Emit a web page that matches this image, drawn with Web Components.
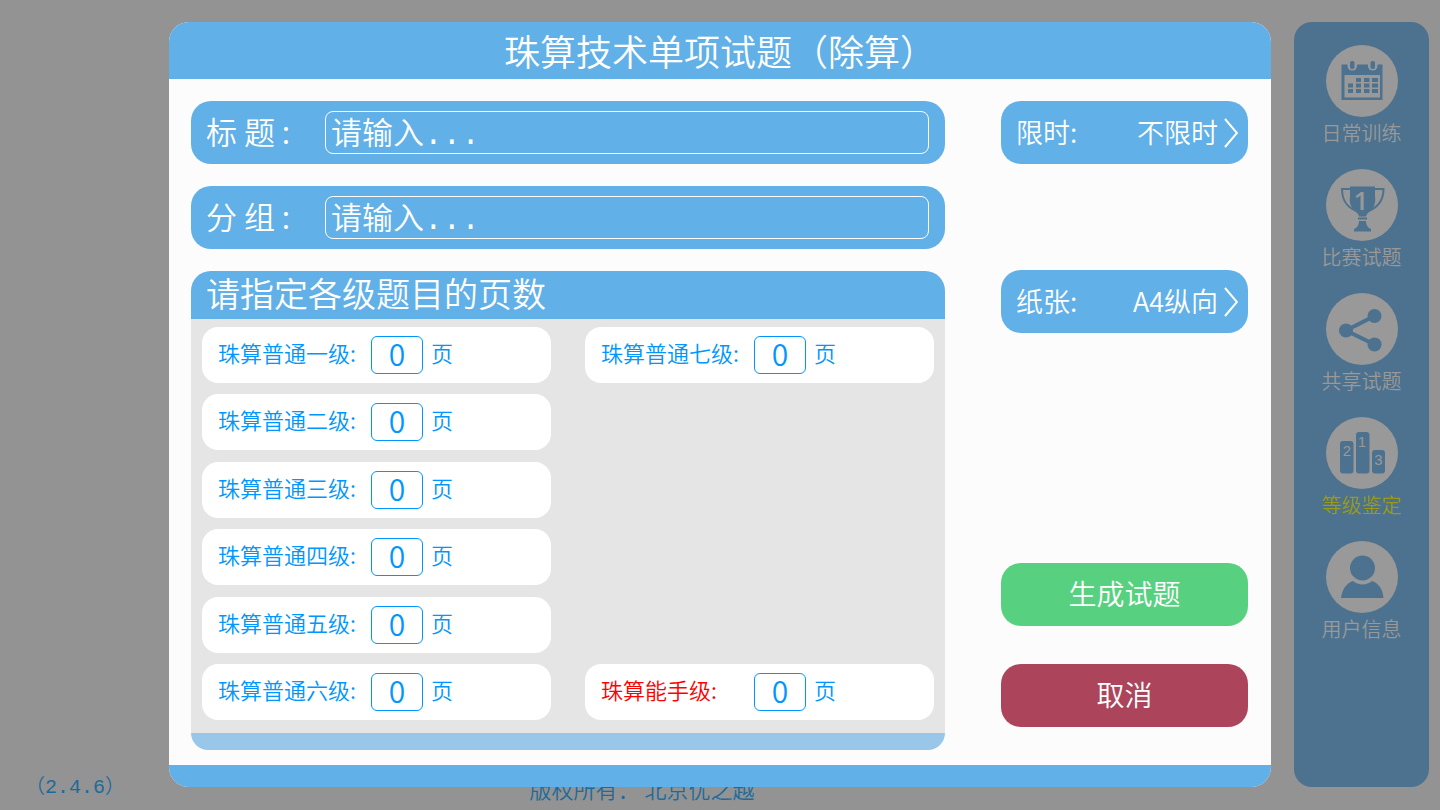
<!DOCTYPE html>
<html lang="zh-CN">
<head>
<meta charset="utf-8">
<meta name="viewport" content="width=device-width, initial-scale=1">
<title>珠算技术单项试题</title>
<style>
    body {
        margin: 0;
        background: #939393;
        font-family: "Noto Sans CJK SC", sans-serif;
        font-weight: 350;
        --blue: #61b0e8;
        --accent: #0096ff;
        --dim-blue: #4c728f;
        --dim-white: #999999;
        --mono: "Liberation Mono", "Noto Sans CJK SC", monospace;
    }
</style>
</head>
<body>
<app-shell>
    <side-nav slot="nav">
        <nav-item href="#daily" icon="calendar">日常训练</nav-item>
        <nav-item href="#match" icon="trophy">比赛试题</nav-item>
        <nav-item href="#share" icon="share">共享试题</nav-item>
        <nav-item href="#grade" icon="podium" active>等级鉴定</nav-item>
        <nav-item href="#user" icon="user">用户信息</nav-item>
    </side-nav>
    <page-footer slot="footer" version="（2.4.6）">版权所有： 北京优之越</page-footer>
    <exam-dialog slot="dialog">
        <span slot="title">珠算技术单项试题（除算）</span>
        <text-row label="标 题 :" name="title"></text-row>
        <text-row label="分 组 :" name="group"></text-row>
        <level-panel>
            <span slot="title">请指定各级题目的页数</span>
            <level-card>珠算普通一级:</level-card>
            <level-card>珠算普通二级:</level-card>
            <level-card>珠算普通三级:</level-card>
            <level-card>珠算普通四级:</level-card>
            <level-card>珠算普通五级:</level-card>
            <level-card>珠算普通六级:</level-card>
            <level-card>珠算普通七级:</level-card>
            <level-card class="last" highlight>珠算能手级:</level-card>
        </level-panel>
        <option-picker slot="side" label="限时:" options="不限时,5分钟,10分钟"></option-picker>
        <option-picker slot="side" label="纸张:" options="A4纵向,A4横向"></option-picker>
        <action-button slot="action">生成试题</action-button>
        <action-button slot="action" variant="cancel">取消</action-button>
    </exam-dialog>
</app-shell>

<script>
const ICONS = {
    calendar: `
        <path class="fg" d="M15.500 19.500h41v35.500h-41z"/>
        <path class="bg" d="M18.500 30h35.500v22.500h-35.500z"/>
        <path class="fg" d="M30 33h5v4h-5zM38 33h5.500v4h-5.500zM46 33h6v4h-6zM22 38.500h5v4h-5zM30 38.500h5v4h-5zM38 38.500h5.500v4h-5.500zM46 38.500h6v4h-6zM22 44h5v4h-5zM30 44h5v4h-5zM38 44h5.500v4h-5.500zM46 44h6v4h-6z"/>
        <rect class="bg" x="21.500" y="14" width="9.500" height="11.500" rx="4.500"/>
        <rect class="bg" x="42" y="14" width="9.500" height="11.500" rx="4.500"/>
        <rect class="fg" x="24" y="16" width="4.500" height="8" rx="2"/>
        <rect class="fg" x="44.500" y="16" width="4.500" height="8" rx="2"/>`,
    trophy: `
        <path class="line" d="M25 20H16C16 32 21 39 33 43M48 20h9.500C57.500 32 52 39 40 43"/>
        <path class="fg" d="M24 17.500H49V27C50 34 48 39 43 43C41 45 40 46 40 47.500H33C33 46 32 45 30 43C25 39 23 34 24 27z"/>
        <path class="fg" d="M32 48.500h9v2h-9zM33 52h7C40 56 42 59 45 60V62.500H28V60C31 59 33 56 33 52z"/>
        <text class="first" x="35" y="41" font-size="26">1</text>`,
    share: `
        <path class="line thick" d="M48.500 23L20 37.500L48.500 51.500"/>
        <circle class="fg" cx="20" cy="37.500" r="7"/>
        <circle class="fg" cx="48.500" cy="23" r="7"/>
        <circle class="fg" cx="48.500" cy="51.500" r="7"/>`,
    podium: `
        <rect class="fg" x="14" y="24" width="13.500" height="32.500" rx="3"/>
        <rect class="fg" x="30" y="15" width="13.500" height="41.500" rx="3"/>
        <rect class="fg" x="46" y="33" width="13" height="23.500" rx="3"/>
        <text x="21" y="39" font-size="15">2</text>
        <text x="36" y="30" font-size="15">1</text>
        <text x="52.500" y="48" font-size="15">3</text>`,
    user: `
        <circle class="fg" cx="36.500" cy="27" r="12.500"/>
        <path class="fg" d="M15 57C16 49 20 42 27 40C32 44.500 41 44.500 46 40C53 42 57 49 57.500 57z"/>`
};

// Small base class: subclasses return their markup from template()
class BaseElement extends HTMLElement {
    constructor() {
        super();
        this.attachShadow({ mode: 'open' });
    }

    connectedCallback() {
        this.shadowRoot.innerHTML = this.template();
    }
}

class AppShell extends BaseElement {
    template() {
        return `
            <style>
                :host {
                    display: grid;
                    grid-template-columns: 1fr 135px;
                    grid-template-rows: 1fr 40px;
                    column-gap: 10px;
                    min-height: 100vh;
                    padding-right: 11px;
                    box-sizing: border-box;
                    position: relative;
                }

                .nav {
                    grid-column: 2;
                    grid-row: 1 / 3;
                    padding: 22px 0 23px;
                    display: grid;
                }

                .footer {
                    grid-column: 1;
                    grid-row: 2;
                }

                /* modal layer above the page, the nav stays visible beside it */
                .overlay {
                    position: absolute;
                    inset: 22px 169px 23px 169px;
                    display: grid;
                }
            </style>
            <div class="nav"><slot name="nav"></slot></div>
            <div class="footer"><slot name="footer"></slot></div>
            <div class="overlay"><slot name="dialog"></slot></div>
        `;
    }
}

class SideNav extends BaseElement {
    template() {
        return `
            <style>
                :host {
                    display: block;
                    background: var(--dim-blue);
                    border-radius: 18px;
                    padding-top: 23px;
                }

                nav {
                    display: flex;
                    flex-direction: column;
                    gap: 20px;
                }
            </style>
            <nav><slot></slot></nav>
        `;
    }
}

class NavItem extends BaseElement {
    template() {
        return `
            <style>
                :host {
                    display: block;
                    color: var(--dim-white);
                }

                :host([active]) {
                    color: #999918;
                }

                a {
                    display: flex;
                    flex-direction: column;
                    align-items: center;
                    color: inherit;
                    text-decoration: none;
                    font-size: 20px;
                    line-height: 32px;
                }

                svg {
                    width: 72px;
                    height: 72px;
                }

                .bg, text {
                    fill: var(--dim-white);
                }

                .fg {
                    fill: var(--dim-blue);
                }

                .line {
                    fill: none;
                    stroke: var(--dim-blue);
                    stroke-width: 2;
                }

                .thick {
                    stroke-width: 4;
                }

                text {
                    font-family: "Liberation Sans", sans-serif;
                    text-anchor: middle;
                }

                .first {
                    font-family: "Open Sans", sans-serif;
                    font-weight: 600;
                }
            </style>
            <a href="${this.getAttribute('href')}">
                <svg viewBox="0 0 72 72" aria-hidden="true">
                    <circle class="bg" cx="36" cy="36" r="36"/>
                    ${ICONS[this.getAttribute('icon')]}
                </svg>
                <slot></slot>
            </a>
        `;
    }
}

class PageFooter extends BaseElement {
    template() {
        return `
            <style>
                :host {
                    display: grid;
                    grid-template-columns: 1fr auto 1fr;
                    color: #1e6b9b;
                    font-size: 22px;
                    line-height: 36px;
                }

                .version {
                    padding-left: 25px;
                    font-family: var(--mono);
                    font-size: 20px;
                }
            </style>
            <span class="version">${this.getAttribute('version')}</span>
            <span><slot></slot></span>
        `;
    }
}

class ExamDialog extends BaseElement {
    template() {
        return `
            <style>
                :host {
                    display: grid;
                    grid-template-rows: 57px 1fr 22px;
                    background: #fcfcfc;
                    border-radius: 20px;
                    overflow: hidden;
                }

                h1 {
                    margin: 0;
                    background: var(--blue);
                    color: #fff;
                    font-size: 36px;
                    font-weight: inherit;
                    line-height: 57px;
                    text-align: center;
                }

                .body {
                    display: grid;
                    grid-template-columns: 1fr 247px;
                    column-gap: 56px;
                    padding: 22px 23px 15px 22px;
                }

                .main {
                    display: grid;
                    grid-template-rows: auto auto 1fr;
                    row-gap: 22px;
                }

                .side {
                    display: flex;
                    flex-direction: column;
                    justify-content: space-between;
                    padding-bottom: 23px;
                }

                .options {
                    display: grid;
                    gap: 106px;
                }

                .actions {
                    display: grid;
                    gap: 38px;
                }

                .bar {
                    background: var(--blue);
                }
            </style>
            <h1><slot name="title"></slot></h1>
            <div class="body">
                <div class="main"><slot></slot></div>
                <div class="side">
                    <div class="options"><slot name="side"></slot></div>
                    <div class="actions"><slot name="action"></slot></div>
                </div>
            </div>
            <div class="bar"></div>
        `;
    }
}

class TextRow extends BaseElement {
    template() {
        const name = this.getAttribute('name');
        return `
            <style>
                :host {
                    display: grid;
                    grid-template-columns: 119px 1fr;
                    align-items: center;
                    height: 63px;
                    box-sizing: border-box;
                    padding: 0 16px 0 15px;
                    background: var(--blue);
                    border-radius: 20px;
                    color: #fff;
                    font-size: 31px;
                }

                label {
                    line-height: 40px;
                    padding-bottom: 4px;
                    white-space: pre;
                }

                input {
                    width: 100%;
                    height: 43px;
                    box-sizing: border-box;
                    padding: 5px 5px 0;
                    border: 1px solid #fff;
                    border-radius: 8px;
                    background: none;
                    color: inherit;
                    font: inherit;
                    font-family: var(--mono);
                }

                input::placeholder {
                    color: #fff;
                    opacity: 1;
                }
            </style>
            <label for="${name}">${this.getAttribute('label')}</label>
            <input id="${name}" name="${name}" type="text" placeholder="请输入...">
        `;
    }
}

class LevelPanel extends BaseElement {
    template() {
        return `
            <style>
                :host {
                    display: grid;
                    grid-template-rows: 48px 1fr 17px;
                    border-radius: 20px;
                    background: #e5e5e5;
                }

                h2 {
                    margin: 0;
                    padding: 0 15px 4px;
                    background: var(--blue);
                    border-radius: 20px 20px 0 0;
                    color: #fff;
                    font-size: 34px;
                    font-weight: inherit;
                    line-height: 44px;
                }

                .grid {
                    display: grid;
                    grid-template-columns: 1fr 1fr;
                    grid-template-rows: repeat(6, 56px);
                    grid-auto-flow: column;
                    align-content: space-between;
                    column-gap: 34px;
                    padding: 8px 11px 13px;
                }

                ::slotted(.last) {
                    grid-column: 2;
                    grid-row: 6;
                }

                .bar {
                    background: #98c7ea;
                    border-radius: 0 0 20px 20px;
                }
            </style>
            <h2><slot name="title"></slot></h2>
            <div class="grid"><slot></slot></div>
            <div class="bar"></div>
        `;
    }
}

class LevelCard extends BaseElement {
    template() {
        return `
            <style>
                :host {
                    display: grid;
                    grid-template-columns: 153px 52px auto;
                    align-items: center;
                    justify-content: start;
                    padding-left: 16px;
                    background: #fff;
                    border-radius: 16px;
                    color: var(--accent);
                    font-size: 22px;
                    line-height: 32px;
                }

                label, .unit {
                    padding-bottom: 6px;
                }

                :host([highlight]) label {
                    color: #ff0000;
                }

                input {
                    width: 52px;
                    height: 38px;
                    box-sizing: border-box;
                    padding: 0 0 4px;
                    border: 1px solid var(--accent);
                    border-radius: 6px;
                    background: none;
                    color: inherit;
                    font: inherit;
                    font-size: 30px;
                    text-align: center;
                }

                .unit {
                    padding-left: 8px;
                }
            </style>
            <label for="pages"><slot></slot></label>
            <input id="pages" type="text" inputmode="numeric" value="0">
            <span class="unit">页</span>
        `;
    }
}

class OptionPicker extends BaseElement {
    template() {
        const options = this.getAttribute('options').split(',');
        return `
            <style>
                :host {
                    display: grid;
                    grid-template-columns: auto 1fr 14px;
                    align-items: center;
                    column-gap: 6px;
                    height: 63px;
                    box-sizing: border-box;
                    padding: 0 10px 0 15px;
                    background: var(--blue);
                    border-radius: 20px;
                    color: #fff;
                    font-size: 27px;
                }

                label {
                    padding-bottom: 2px;
                }

                select {
                    appearance: none;
                    min-width: 0;
                    height: 43px;
                    padding: 0 0 2px;
                    border: none;
                    background: none;
                    color: inherit;
                    font: inherit;
                    text-align: right;
                    text-align-last: right;
                }

                option {
                    color: #333;
                }

                svg {
                    width: 14px;
                    height: 30px;
                    fill: none;
                    stroke: #fff;
                    stroke-width: 2;
                }
            </style>
            <label for="choice">${this.getAttribute('label')}</label>
            <select id="choice">
                ${options.map(text => `<option>${text}</option>`).join('')}
            </select>
            <svg viewBox="0 0 14 30" aria-hidden="true"><path d="M1 1L13 15L1 29"/></svg>
        `;
    }
}

class ActionButton extends BaseElement {
    template() {
        return `
            <style>
                :host {
                    display: block;
                }

                button {
                    display: block;
                    width: 100%;
                    height: 63px;
                    padding: 0 0 4px;
                    border: none;
                    border-radius: 20px;
                    background: #57d17f;
                    color: #fff;
                    font: inherit;
                    font-size: 28px;
                    cursor: pointer;
                }

                :host([variant="cancel"]) button {
                    background: #ac455b;
                }
            </style>
            <button type="button"><slot></slot></button>
        `;
    }
}

customElements.define('app-shell', AppShell);
customElements.define('side-nav', SideNav);
customElements.define('nav-item', NavItem);
customElements.define('page-footer', PageFooter);
customElements.define('exam-dialog', ExamDialog);
customElements.define('text-row', TextRow);
customElements.define('level-panel', LevelPanel);
customElements.define('level-card', LevelCard);
customElements.define('option-picker', OptionPicker);
customElements.define('action-button', ActionButton);
</script>
</body>
</html>
